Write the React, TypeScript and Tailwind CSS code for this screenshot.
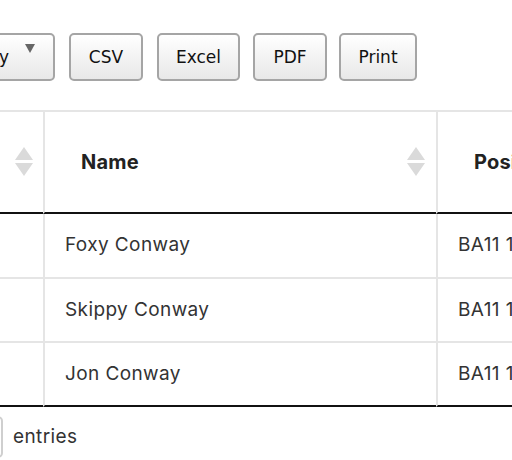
import React from "react";

const rows = [
  { name: "Foxy Conway", pos: "BA11 1AA" },
  { name: "Skippy Conway", pos: "BA11 1AB" },
  { name: "Jon Conway", pos: "BA11 1AC" },
];

const SortIcon = () => (
  <svg width="18" height="30" viewBox="0 0 18 30" className="shrink-0">
    <polygon points="9,0 18,13 0,13" fill="#dadada" />
    <polygon points="0,16 18,16 9,29" fill="#dadada" />
  </svg>
);

const btn =
  "shrink-0 h-[48px] border-2 border-[#a5a5a5] rounded-[5px] bg-gradient-to-b from-white to-[#e8e8e8] text-[17px] text-[#111] leading-none flex items-center justify-center";

const App = () => {
  return (
    <div
      className="w-full h-[460px] overflow-hidden bg-white"
      style={{ fontFamily: "Inter, 'Liberation Sans', sans-serif" }}
    >
      <div
        className="flex items-start pt-[33px]"
        style={{ fontFamily: "'DejaVu Sans', Verdana, sans-serif" }}
      >
        <div className="w-[55px] shrink-0 flex justify-end">
          <button className={btn + " pl-[18px] pr-[18px] gap-[16px]"}>
            <span>Column visibility</span>
            <svg width="10" height="9" viewBox="0 0 10 9" className="mb-[18px]">
              <polygon points="0,0 10,0 5,9" fill="#666" />
            </svg>
          </button>
        </div>
        <button className={btn + " ml-[14px] w-[74px]"}>CSV</button>
        <button className={btn + " ml-[14px] w-[83px]"}>Excel</button>
        <button className={btn + " ml-[13px] w-[74px]"}>PDF</button>
        <button className={btn + " ml-[12px] w-[78px]"}>Print</button>
      </div>

      <table className="mt-[29px] -ml-[100px] table-fixed border-separate border-spacing-0 w-[736px]">
        <colgroup>
          <col className="w-[143px]" />
          <col className="w-[393px]" />
          <col className="w-[200px]" />
        </colgroup>
        <thead>
          <tr>
            <th className="h-[104px] border-t-2 border-b-2 border-t-[#e5e5e5] border-b-[#111] p-0">
              <div className="flex justify-end pr-[10px]">
                <SortIcon />
              </div>
            </th>
            <th className="h-[104px] border-t-2 border-b-2 border-l-2 border-t-[#e5e5e5] border-l-[#e5e5e5] border-b-[#111] p-0">
              <div className="flex items-center justify-between pl-[36px] pr-[11px] text-[20px] font-bold text-[#222] text-left tracking-[0.2px]">
                <span>Name</span>
                <SortIcon />
              </div>
            </th>
            <th className="h-[104px] border-t-2 border-b-2 border-l-2 border-t-[#e5e5e5] border-l-[#e5e5e5] border-b-[#111] p-0 text-left">
              <span className="pl-[36px] text-[20px] font-bold text-[#222] whitespace-nowrap tracking-[0.2px]">
                Position
              </span>
            </th>
          </tr>
        </thead>
        <tbody>
          {rows.map((r, i) => {
            const last = i === rows.length - 1;
            const tb =
              (i > 0 ? " border-t-2 border-t-[#e5e5e5]" : "") +
              (last ? " border-b-2 border-b-[#111]" : "");
            const h = i === 0 ? "h-[63px]" : last ? "h-[66px]" : "h-[64px]";
            return (
              <tr key={r.name}>
                <td className={h + " p-0" + tb}></td>
                <td
                  className={
                    h +
                    " p-0 pl-[20px] border-l-2 border-l-[#e5e5e5] text-[19px] text-[#333] tracking-[0.4px]" +
                    tb
                  }
                >
                  {r.name}
                </td>
                <td
                  className={
                    h +
                    " p-0 pl-[20px] border-l-2 border-l-[#e5e5e5] text-[19px] text-[#333] whitespace-nowrap tracking-[0.4px]" +
                    tb
                  }
                >
                  {r.pos}
                </td>
              </tr>
            );
          })}
        </tbody>
      </table>

      <div className="flex items-center mt-[9px]">
        <div className="w-[3px] shrink-0 flex justify-end">
          <div className="shrink-0 w-[80px] h-[42px] border-2 border-[#cfcfcf] rounded-[5px]"></div>
        </div>
        <span className="ml-[10px] text-[19px] text-[#333] tracking-[0.4px]">entries</span>
      </div>
    </div>
  );
};

export default App;
